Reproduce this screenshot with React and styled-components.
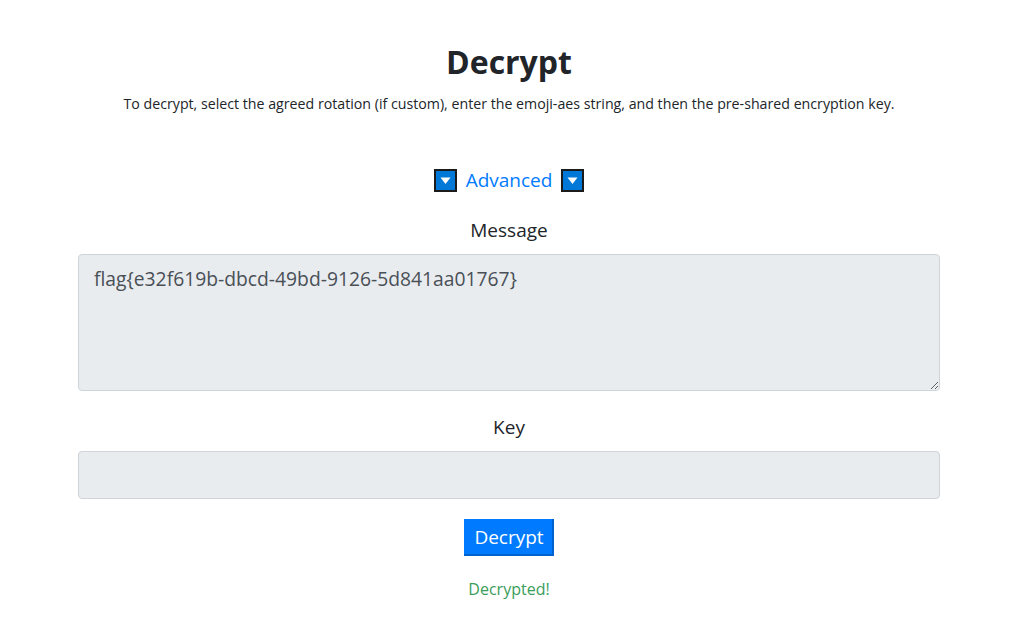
import React from 'react';
import styled, { createGlobalStyle } from 'styled-components';

const Global = createGlobalStyle`
    body {
        margin: 0;
        background: #fff;
        font-family: "Open Sans", "Noto Sans", sans-serif;
        color: #212529;
    }
`;

const Page = styled.div`
    display: flex;
    flex-flow: column;
    align-items: center;
    padding: 40px 0 0 3px;
`;

const Title = styled.h1`
    font-size: 32px;
    font-weight: 700;
    margin: 0;
    line-height: 44px;
`;

const Lead = styled.p`
    font-size: 14.2px;
    margin: 10px 0 0 0;
`;

const AdvancedRow = styled.div`
    display: flex;
    align-items: center;
    gap: 9px;
    margin-top: 54px;
    color: #007bff;
    font-size: 19px;
    cursor: pointer;
`;

const Form = styled.div`
    width: 862px;
    display: flex;
    flex-flow: column;
    align-items: center;
    margin-top: 23px;
`;

const Label = styled.label`
    font-size: 19px;
    line-height: 28px;
    margin-bottom: 10px;
`;

const TextArea = styled.textarea`
    box-sizing: border-box;
    width: 100%;
    height: 137px;
    background: #e9ecef;
    border: 1px solid #ced4da;
    border-radius: 4px;
    padding: 10px 15px;
    font-family: inherit;
    font-size: 19.3px;
    color: #495057;
    line-height: 28px;
    resize: vertical;
    margin-bottom: 22px;
`;

const Input = styled.input`
    box-sizing: border-box;
    width: 100%;
    height: 48px;
    background: #e9ecef;
    border: 1px solid #ced4da;
    border-radius: 4px;
    font-size: 19px;
    padding: 0 15px;
`;

const Button = styled.button`
    margin-top: 20px;
    background: #007bff;
    color: #fff;
    border: none;
    border-right: 2px solid #0062cc;
    border-bottom: 2px solid #0062cc;
    font-family: inherit;
    font-size: 19px;
    height: 37px;
    padding: 0 8px 0 10px;
    cursor: pointer;
`;

const Status = styled.div`
    color: #3a9d5a;
    font-size: 16px;
    margin-top: 22px;
`;

const Toggle = () => (
    <svg width="23" height="23" viewBox="0 0 23 23">
        <rect x="1" y="1" width="21" height="21" fill="#0078d7" stroke="#1b1b1b" strokeWidth="2" />
        <polygon points="6.5,8.5 16.5,8.5 11.5,15" fill="#fff" />
    </svg>
);

const App = () => (
    <>
        <Global />
        <Page>
            <Title>Decrypt</Title>
            <Lead>To decrypt, select the agreed rotation (if custom), enter the emoji-aes string, and then the pre-shared encryption key.</Lead>
            <AdvancedRow>
                <Toggle />
                <span>Advanced</span>
                <Toggle />
            </AdvancedRow>
            <Form>
                <Label>Message</Label>
                <TextArea defaultValue="flag{e32f619b-dbcd-49bd-9126-5d841aa01767}" />
                <Label>Key</Label>
                <Input />
                <Button>Decrypt</Button>
                <Status>Decrypted!</Status>
            </Form>
        </Page>
    </>
);

export default App;
